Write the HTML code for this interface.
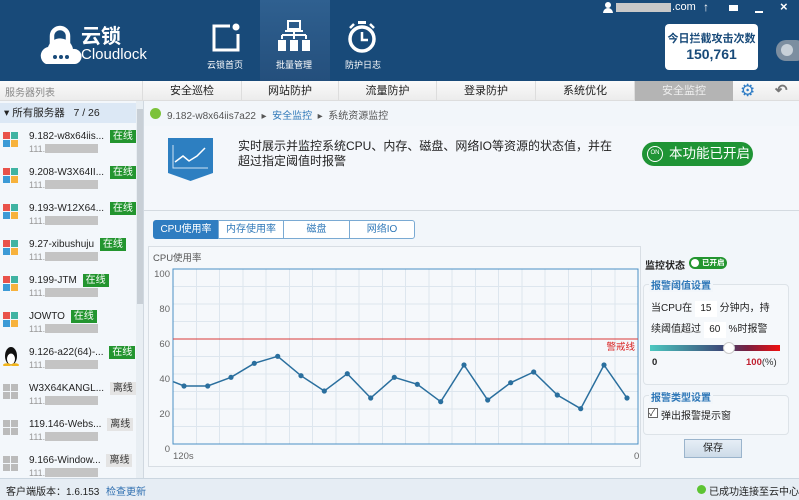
<!DOCTYPE html>
<html><head><meta charset="utf-8"><style>
*{margin:0;padding:0;box-sizing:border-box}
body{width:799px;height:500px;overflow:hidden;position:relative;background:#f2f6fa;font-family:"Liberation Sans","Noto Sans CJK SC",sans-serif;font-size:11px;color:#333}
.a{position:absolute}
.hdr{left:0;top:0;width:799px;height:81px;background:#184a79}
.nav{color:#fff;font-size:9px;text-align:center;width:70px}
.tabbar{left:0;top:81px;width:799px;height:20px;background:linear-gradient(#fafafa,#ececec);border-bottom:1px solid #ddd}
.tab{top:81px;height:20px;line-height:20px;text-align:center;font-size:11px;color:#222;border-left:1px solid #ddd}
.side{left:0;top:101px;width:144px;height:377px;background:#f3f7fb;border-right:1px solid #d0d8e0;overflow:hidden}
.item{position:absolute;left:0;width:136px;height:36px}
.nm{position:absolute;left:29px;top:4px;font-size:10px;color:#222;white-space:nowrap}
.ip{position:absolute;left:29px;top:21px;font-size:9px;color:#999}
.ip i{display:inline-block;width:53px;height:9px;background:#c4c4c4;vertical-align:-1px}
.on{background:#23952f;color:#fff;font-size:10px;padding:1px 3px;margin-left:3px}
.off{background:#e4e4e4;color:#333;font-size:10px;padding:1px 3px;margin-left:3px}
.win{position:absolute;left:3px;top:9px;width:16px;height:16px}
.win b{position:absolute;width:7px;height:7px}
.stat{left:0;top:478px;width:799px;height:22px;background:#e6edf4;border-top:1px solid #cbd6e0}
.btab{top:220px;height:19px;line-height:18px;text-align:center;font-size:10px;color:#2f78b8;border:1px solid #7aaad3;background:#fff}
</style></head><body>
<div class="a hdr"></div>
<div class="a" style="left:260px;top:0;width:70px;height:81px;background:linear-gradient(#2f6090,#244f7c)"></div>
<svg class="a" style="left:38px;top:22px" width="44" height="44" viewBox="0 0 44 44">
<path d="M14 22 V14 a8 8 0 0 1 16 0 V22" fill="none" stroke="#fff" stroke-width="4.5"/>
<path d="M8 42 a9 9 0 0 1 2-17 a13 13 0 0 1 25 2 a7.5 7.5 0 0 1 2 15 z" fill="#fff"/>
<circle cx="17" cy="35" r="2" fill="#184a79"/><circle cx="23" cy="35" r="2" fill="#184a79"/><circle cx="29" cy="35" r="2" fill="#184a79"/>
</svg>
<div class="a" style="left:81px;top:26px;color:#fff;font-size:20px;font-weight:bold;line-height:22px">云锁</div>
<div class="a" style="left:81px;top:47px;color:#fff;font-size:15px;line-height:16px">Cloudlock</div>
<svg class="a" style="left:210px;top:22px" width="32" height="32"><path d="M20 4 H4 V28 H28 V12" fill="none" stroke="#fff" stroke-width="3"/><circle cx="26" cy="5" r="3.5" fill="#fff"/></svg>
<div class="a nav" style="left:190px;top:58px">云锁首页</div>
<svg class="a" style="left:277px;top:20px" width="34" height="34"><rect x="11" y="1" width="12" height="8" fill="none" stroke="#fff" stroke-width="2"/><path d="M8 11H26M17 11V15M5 15H29M5 15V19M17 15V19M29 15V19" stroke="#fff" stroke-width="2" fill="none"/><rect x="1" y="20" width="8" height="11" fill="#fff"/><rect x="13" y="20" width="8" height="11" fill="#fff"/><rect x="25" y="20" width="8" height="11" fill="#fff"/></svg>
<div class="a nav" style="left:259px;top:58px">批量管理</div>
<svg class="a" style="left:345px;top:20px" width="34" height="34"><circle cx="17" cy="19" r="12" fill="none" stroke="#fff" stroke-width="3.5"/><path d="M17 12V20H23" stroke="#fff" stroke-width="2.5" fill="none"/><rect x="13" y="1" width="8" height="3" fill="#fff"/><path d="M5 8L9 4M29 8L25 4" stroke="#fff" stroke-width="2.5"/></svg>
<div class="a nav" style="left:328px;top:58px">防护日志</div>
<svg class="a" style="left:603px;top:2px" width="10" height="11"><circle cx="5" cy="3" r="3" fill="#fff"/><path d="M0 11 a5 5 0 0 1 10 0z" fill="#fff"/></svg>
<div class="a" style="left:616px;top:3px;width:55px;height:9px;background:#c8c8c8"></div>
<div class="a" style="left:672px;top:1px;color:#fff;font-size:11px">.com</div>
<div class="a" style="left:703px;top:0px;color:#fff;font-size:12px;font-weight:bold">↑</div>
<div class="a" style="left:729px;top:5px;width:9px;height:6px;background:#fff"></div>
<div class="a" style="left:755px;top:11px;width:8px;height:2px;background:#fff"></div>
<div class="a" style="left:780px;top:-1px;color:#fff;font-size:13px;font-weight:bold">×</div>
<div class="a" style="left:665px;top:24px;width:93px;height:46px;background:#fff;border-radius:4px;text-align:center;color:#184a79">
<div style="font-size:11px;font-weight:bold;margin-top:9px;line-height:13px">今日拦截攻击次数</div>
<div style="font-size:14px;font-weight:bold;line-height:17px">150,761</div></div>
<div class="a" style="left:776px;top:40px;width:30px;height:21px;background:#7c8ea0;border-radius:10px"></div>
<div class="a" style="left:781px;top:44px;width:12px;height:12px;border-radius:6px;background:#c7d0d8"></div>
<div class="a tabbar"></div>
<div class="a" style="left:5px;top:84px;color:#888;font-size:10px">服务器列表</div>
<div class="a tab" style="left:142px;width:99px">安全巡检</div>
<div class="a tab" style="left:241px;width:97px">网站防护</div>
<div class="a tab" style="left:338px;width:98px">流量防护</div>
<div class="a tab" style="left:436px;width:99px">登录防护</div>
<div class="a tab" style="left:535px;width:99px">系统优化</div>
<div class="a tab" style="left:634px;width:99px;background:#b4b4b4;color:#eee">安全监控</div>
<div class="a" style="left:740px;top:81px;color:#2f7dc6;font-size:17px;line-height:19px">⚙</div>
<div class="a" style="left:775px;top:81px;color:#777;font-size:15px;line-height:19px;font-weight:bold">↶</div>
<div class="a side">
<div style="position:absolute;left:0;top:2px;width:136px;height:20px;background:#dce8f5;font-size:10.5px;line-height:20px;color:#222;padding-left:4px">▾ 所有服务器 &nbsp; 7 / 26</div>
<div style="position:absolute;left:136px;top:0;width:8px;height:377px;background:#e8eef3"></div>
<div style="position:absolute;left:137px;top:8px;width:6px;height:195px;background:#c8cfd6"></div>
</div>
<div class="a" style="left:0;top:123px;width:136px;height:355px;overflow:hidden">
<div class="item" style="top:0"><div class="win"><b style="left:0;top:0;background:#e9524a"></b><b style="left:8px;top:0;background:#3fb3a2"></b><b style="left:0;top:8px;background:#3c9ad6"></b><b style="left:8px;top:8px;background:#f7b23c"></b></div><div class="nm">9.182-w8x64iis... <span class="on">在线</span></div><div class="ip">111.<i></i></div></div>
<div class="item" style="top:36px"><div class="win"><b style="left:0;top:0;background:#e9524a"></b><b style="left:8px;top:0;background:#3fb3a2"></b><b style="left:0;top:8px;background:#3c9ad6"></b><b style="left:8px;top:8px;background:#f7b23c"></b></div><div class="nm">9.208-W3X64II... <span class="on">在线</span></div><div class="ip">111.<i></i></div></div>
<div class="item" style="top:72px"><div class="win"><b style="left:0;top:0;background:#e9524a"></b><b style="left:8px;top:0;background:#3fb3a2"></b><b style="left:0;top:8px;background:#3c9ad6"></b><b style="left:8px;top:8px;background:#f7b23c"></b></div><div class="nm">9.193-W12X64... <span class="on">在线</span></div><div class="ip">111.<i></i></div></div>
<div class="item" style="top:108px"><div class="win"><b style="left:0;top:0;background:#e9524a"></b><b style="left:8px;top:0;background:#3fb3a2"></b><b style="left:0;top:8px;background:#3c9ad6"></b><b style="left:8px;top:8px;background:#f7b23c"></b></div><div class="nm">9.27-xibushuju <span class="on">在线</span></div><div class="ip">111.<i></i></div></div>
<div class="item" style="top:144px"><div class="win"><b style="left:0;top:0;background:#e9524a"></b><b style="left:8px;top:0;background:#3fb3a2"></b><b style="left:0;top:8px;background:#3c9ad6"></b><b style="left:8px;top:8px;background:#f7b23c"></b></div><div class="nm">9.199-JTM <span class="on">在线</span></div><div class="ip">111.<i></i></div></div>
<div class="item" style="top:180px"><div class="win"><b style="left:0;top:0;background:#e9524a"></b><b style="left:8px;top:0;background:#3fb3a2"></b><b style="left:0;top:8px;background:#3c9ad6"></b><b style="left:8px;top:8px;background:#f7b23c"></b></div><div class="nm">JOWTO <span class="on">在线</span></div><div class="ip">111.<i></i></div></div>
<div class="item" style="top:216px"><svg style="position:absolute;left:3px;top:7px" width="16" height="20"><ellipse cx="8" cy="10" rx="6" ry="9" fill="#111"/><ellipse cx="8" cy="13" rx="4" ry="5.5" fill="#fff"/><ellipse cx="4" cy="19" rx="4" ry="1.8" fill="#f2b51c"/><ellipse cx="12" cy="19" rx="4" ry="1.8" fill="#f2b51c"/></svg><div class="nm">9.126-a22(64)-... <span class="on">在线</span></div><div class="ip">111.<i></i></div></div>
<div class="item" style="top:252px"><div class="win"><b style="left:0;top:0;background:#bbb"></b><b style="left:8px;top:0;background:#bbb"></b><b style="left:0;top:8px;background:#bbb"></b><b style="left:8px;top:8px;background:#bbb"></b></div><div class="nm">W3X64KANGL... <span class="off">离线</span></div><div class="ip">111.<i></i></div></div>
<div class="item" style="top:288px"><div class="win"><b style="left:0;top:0;background:#bbb"></b><b style="left:8px;top:0;background:#bbb"></b><b style="left:0;top:8px;background:#bbb"></b><b style="left:8px;top:8px;background:#bbb"></b></div><div class="nm">119.146-Webs... <span class="off">离线</span></div><div class="ip">111.<i></i></div></div>
<div class="item" style="top:324px"><div class="win"><b style="left:0;top:0;background:#bbb"></b><b style="left:8px;top:0;background:#bbb"></b><b style="left:0;top:8px;background:#bbb"></b><b style="left:8px;top:8px;background:#bbb"></b></div><div class="nm">9.166-Window... <span class="off">离线</span></div><div class="ip">111.<i></i></div></div>
</div>
<div class="a stat"></div>
<div class="a" style="left:6px;top:483px;font-size:10px;color:#222">客户端版本：1.6.153</div>
<div class="a" style="left:106px;top:483px;font-size:10px;color:#2f6fb0">检查更新</div>
<div class="a" style="left:697px;top:485px;width:9px;height:9px;border-radius:5px;background:#5dc433"></div>
<div class="a" style="left:709px;top:483px;font-size:10px;color:#222">已成功连接至云中心</div>
<div class="a" style="left:150px;top:108px;width:11px;height:11px;border-radius:6px;background:#7cc23a"></div>
<div class="a" style="left:167px;top:107px;font-size:10px;color:#555">9.182-w8x64iis7a22 &nbsp;▸ &nbsp;<span style="color:#2f78b8">安全监控</span> &nbsp;▸ &nbsp;系统资源监控</div>
<div class="a" style="left:144px;top:126px;width:655px;height:85px;background:#f4f7fb;border-bottom:1px solid #d4dae0"></div>
<svg class="a" style="left:168px;top:138px" width="45" height="43"><path d="M0 0H45V35L22.5 43L0 35Z" fill="#2d7fc1"/><path d="M5 7V30H40" stroke="#cfe3f3" stroke-width="1" fill="none"/><path d="M7 24L15 18L21 23L29 18L37 10" stroke="#fff" stroke-width="1.5" fill="none"/></svg>
<div class="a" style="left:238px;top:139px;font-size:12px;line-height:15px;color:#222;width:380px">实时展示并监控系统CPU、内存、磁盘、网络IO等资源的状态值，并在超过指定阈值时报警</div>
<div class="a" style="left:642px;top:142px;width:111px;height:24px;border-radius:12px;background:#1f9435;color:#fff;font-size:13.5px;line-height:24px;padding-left:27px">本功能已开启</div>
<div class="a" style="left:647px;top:146px;width:16px;height:16px;border-radius:8px;border:1.5px solid #fff;color:#fff;font-size:6px;line-height:13px;text-align:center">ON</div>
<div class="a btab" style="left:153px;width:66px;background:#2f7dc1;color:#fff;border-color:#2f7dc1;border-radius:3px 0 0 3px">CPU使用率</div>
<div class="a btab" style="left:218px;width:66px">内存使用率</div>
<div class="a btab" style="left:283px;width:67px">磁盘</div>
<div class="a btab" style="left:349px;width:66px;border-radius:0 3px 3px 0">网络IO</div>
<div class="a" style="left:148px;top:246px;width:493px;height:221px;border:1px solid #d8dee4;background:#f5f8fb"></div>
<div class="a" style="left:153px;top:250px;font-size:9.5px;color:#555">CPU使用率</div>
<svg class="a" style="left:145px;top:260px" width="500" height="205">
<g stroke="#dde6ee" stroke-width="1">
<path d="M28 26.5H493M28 44H493M28 61.5H493M28 96.5H493M28 114H493M28 131.5H493M28 149H493M28 166.5H493M28 184H493"/>
<path d="M51.5 9V184M74.5 9V184M98 9V184M121 9V184M144.5 9V184M167.5 9V184M191 9V184M214 9V184M237.5 9V184M260.5 9V184M284 9V184M307 9V184M330.5 9V184M353.5 9V184M377 9V184M400 9V184M423.5 9V184M446.5 9V184M470 9V184"/>
</g>
<rect x="28" y="9" width="465" height="175" fill="none" stroke="#4a90c4" stroke-width="1"/>
<line x1="28" y1="79" x2="493" y2="79" stroke="#d93a3a" stroke-width="1"/>
<text x="490" y="90" font-size="9.5" fill="#d92020" text-anchor="end" font-family="Liberation Sans,Noto Sans CJK SC,sans-serif">警戒线</text>
<g font-size="9.5" fill="#666" text-anchor="end" font-family="Liberation Sans,sans-serif">
<text x="25" y="17">100</text><text x="25" y="52">80</text><text x="25" y="87">60</text><text x="25" y="122">40</text><text x="25" y="157">20</text><text x="25" y="192">0</text></g>
<text x="28" y="199" font-size="9.5" fill="#666" font-family="Liberation Sans,sans-serif">120s</text>
<text x="489" y="199" font-size="9.5" fill="#666" font-family="Liberation Sans,sans-serif">0</text>
<polyline fill="none" stroke="#2a6f9e" stroke-width="1.5" points="28.3,121.7 39,126 62.7,126 86,117.3 109.3,103.3 132.7,96.3 156,115.7 179.3,131 202.3,113.7 225.7,138 249.3,117.3 272.3,124.3 295.7,141.7 319,105 342.7,140 365.7,122.7 388.7,112 412.3,135 435.7,148.7 459,105 482,138"/>
<g fill="#2a6f9e"><circle cx="39" cy="126" r="2.6"/><circle cx="62.7" cy="126" r="2.6"/><circle cx="86" cy="117.3" r="2.6"/><circle cx="109.3" cy="103.3" r="2.6"/><circle cx="132.7" cy="96.3" r="2.6"/><circle cx="156" cy="115.7" r="2.6"/><circle cx="179.3" cy="131" r="2.6"/><circle cx="202.3" cy="113.7" r="2.6"/><circle cx="225.7" cy="138" r="2.6"/><circle cx="249.3" cy="117.3" r="2.6"/><circle cx="272.3" cy="124.3" r="2.6"/><circle cx="295.7" cy="141.7" r="2.6"/><circle cx="319" cy="105" r="2.6"/><circle cx="342.7" cy="140" r="2.6"/><circle cx="365.7" cy="122.7" r="2.6"/><circle cx="388.7" cy="112" r="2.6"/><circle cx="412.3" cy="135" r="2.6"/><circle cx="435.7" cy="148.7" r="2.6"/><circle cx="459" cy="105" r="2.6"/><circle cx="482" cy="138" r="2.6"/></g>
</svg>
<div class="a" style="left:645px;top:257px;font-size:10px;font-weight:bold;color:#222">监控状态</div>
<div class="a" style="left:689px;top:257px;width:38px;height:12px;border-radius:6px;background:#23952f;color:#fff;font-size:7.5px;line-height:12px;padding-left:13px;font-weight:bold">已开启</div>
<div class="a" style="left:691px;top:259px;width:8px;height:8px;border-radius:4px;background:#fff"></div>
<div class="a" style="left:643px;top:284px;width:146px;height:101px;border:1px solid #dde3e8;border-radius:4px;background:#f5f8fb"></div>
<div class="a" style="left:649px;top:277px;font-size:10px;font-weight:bold;color:#2f78b8;background:#f2f6fa;padding:0 2px">报警阈值设置</div>
<div class="a" style="left:651px;top:299px;font-size:10px;color:#222">当CPU在 <span style="display:inline-block;width:22px;height:16px;background:#fff;text-align:center;line-height:16px">15</span> 分钟内，持</div>
<div class="a" style="left:651px;top:320px;font-size:10px;color:#222">续阈值超过 <span style="display:inline-block;width:22px;height:16px;background:#fff;text-align:center;line-height:16px">60</span> %时报警</div>
<div class="a" style="left:650px;top:345px;width:130px;height:6px;background:linear-gradient(90deg,#4cc8c0,#3c4a78 55%,#7a1f40 75%,#f01010)"></div>
<div class="a" style="left:723px;top:342px;width:12px;height:12px;border-radius:6px;background:#fff;border:1px solid #ccc"></div>
<div class="a" style="left:652px;top:357px;font-size:9.5px;font-weight:bold;color:#222">0</div>
<div class="a" style="left:746px;top:357px;font-size:9.5px;color:#333"><b style="color:#c02030">100</b>(%)</div>
<div class="a" style="left:643px;top:395px;width:146px;height:40px;border:1px solid #dde3e8;border-radius:4px;background:#f5f8fb"></div>
<div class="a" style="left:649px;top:389px;font-size:10px;font-weight:bold;color:#2f78b8;background:#f2f6fa;padding:0 2px">报警类型设置</div>
<div class="a" style="left:648px;top:408px;width:10px;height:10px;border:1px solid #666;background:#fff;font-size:9px;line-height:8px">✓</div>
<div class="a" style="left:661px;top:407px;font-size:10px;color:#222">弹出报警提示窗</div>
<div class="a" style="left:684px;top:439px;width:58px;height:19px;border:1px solid #9ab4cc;background:linear-gradient(#e6eef6,#cddbe8);text-align:center;line-height:17px;font-size:10px;color:#222">保存</div>
</body></html>
